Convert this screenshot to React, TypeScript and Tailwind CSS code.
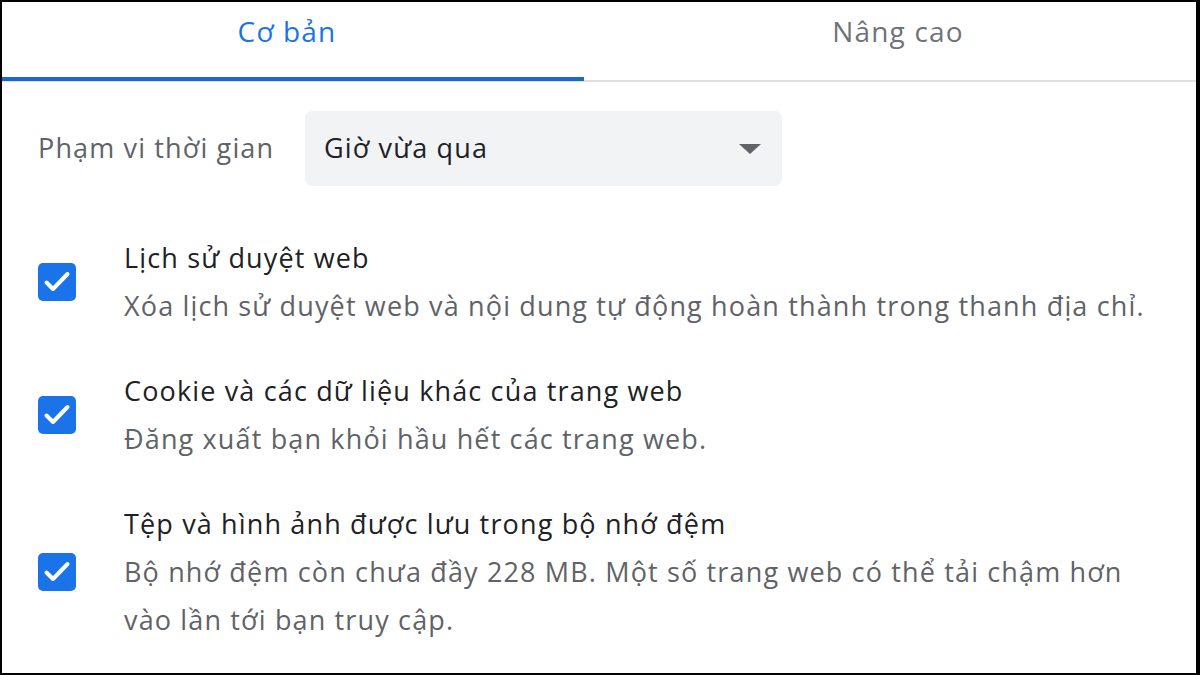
import React from "react";

const font = { fontFamily: "'Open Sans', Roboto, sans-serif" };

function Check() {
  return (
    <div className="w-[38px] h-[38px] shrink-0 rounded-[5px] bg-[#1a73e8] flex items-center justify-center">
      <svg width="38" height="38" viewBox="0 0 38 38" fill="none">
        <path d="M8.5 19.5l6.5 6.5L29.5 11" stroke="white" strokeWidth="4" strokeLinecap="round" strokeLinejoin="round" />
      </svg>
    </div>
  );
}

const items = [
  {
    title: "Lịch sử duyệt web",
    desc: ["Xóa lịch sử duyệt web và nội dung tự động hoàn thành trong thanh địa chỉ."],
  },
  {
    title: "Cookie và các dữ liệu khác của trang web",
    desc: ["Đăng xuất bạn khỏi hầu hết các trang web."],
  },
  {
    title: "Tệp và hình ảnh được lưu trong bộ nhớ đệm",
    desc: ["Bộ nhớ đệm còn chưa đầy 228 MB. Một số trang web có thể tải chậm hơn", "vào lần tới bạn truy cập."],
  },
];

export default function App() {
  return (
    <div className="w-[1200px] h-[675px] bg-black pt-[2px] pl-[2px] pr-[4px] pb-[2px] tracking-[1.15px]" style={font}>
      <div className="w-full h-full bg-white overflow-hidden">
        {/* Tabs */}
        <div className="flex h-[80px] border-b-2 border-[#e0e0e0]">
          <div className="relative w-[582px] flex items-center justify-center pb-[20px] pr-[12px]">
            <span className="text-[28px] text-[#1a73e8]">Cơ bản</span>
            <div className="absolute left-0 right-0 bottom-[-1px] h-[4px] bg-[#1a66d2]" />
          </div>
          <div className="flex-1 flex items-center justify-center pb-[20px] pl-[16px]">
            <span className="text-[28px] text-[#6f7378]">Nâng cao</span>
          </div>
        </div>

        <div className="pl-[36px] pt-[29px]">
          {/* Time range */}
          <div className="flex items-center">
            <span className="w-[267px] text-[27px] text-[#5f6368]">Phạm vi thời gian</span>
            <div className="w-[477px] h-[75px] rounded-[7px] bg-[#f1f3f4] flex items-center justify-between pl-[19px] pr-[20px]">
              <span className="text-[27px] text-[#202124]">Giờ vừa qua</span>
              <svg width="24" height="12" viewBox="0 0 24 12">
                <path d="M1 1h22L12 11z" fill="#5f6368" />
              </svg>
            </div>
          </div>

          {/* Checkbox items */}
          <div className="flex flex-col gap-[37px] mt-[48px]">
            {items.map((it) => (
              <div key={it.title} className="flex items-center gap-[48px]">
                <Check />
                <div className="text-[27px] leading-[48px]">
                  <div className="text-[#202124]">{it.title}</div>
                  {it.desc.map((d) => (
                    <div key={d} className="text-[#5f6368]">{d}</div>
                  ))}
                </div>
              </div>
            ))}
          </div>
        </div>
      </div>
    </div>
  );
}
